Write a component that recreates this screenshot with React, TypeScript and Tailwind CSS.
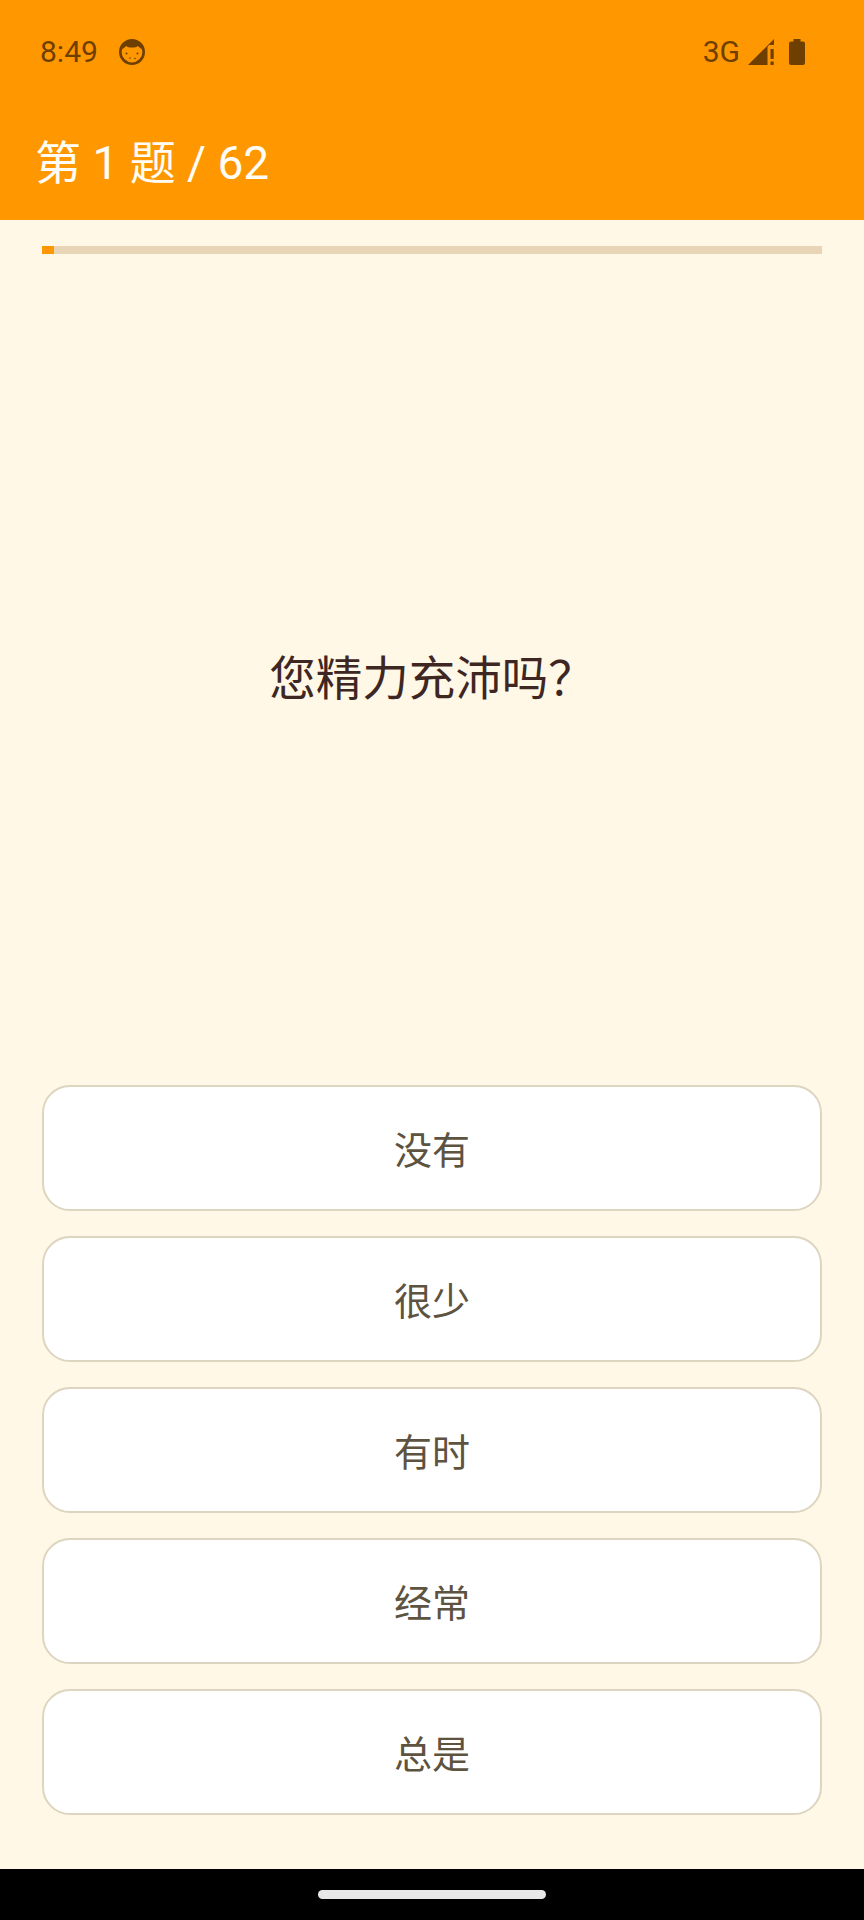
const options = ['没有', '很少', '有时', '经常', '总是'];

const FaceIcon = () => (
  <svg width="28" height="28" viewBox="0 0 28 28" fill="none">
    <circle cx="14" cy="14" r="11.7" stroke="#6e3f00" strokeWidth="2.6" />
    <path d="M4 11c1-5 5-9 10-9s9 4 10 9c-2-.5-3-2-4-3-1.500 1-3 1.500-6 1.500S9.500 9 8 8c-1 1-2 2.500-4 3z" fill="#6e3f00" />
    <circle cx="8.500" cy="15.500" r="1" fill="#6e3f00" />
    <circle cx="19.500" cy="15.500" r="1" fill="#6e3f00" />
    <circle cx="12" cy="20" r="0.800" fill="#6e3f00" />
    <circle cx="17" cy="20.500" r="0.800" fill="#6e3f00" />
  </svg>
);

const SignalIcon = () => (
  <svg width="28" height="28" viewBox="0 0 28 28" fill="#6e3f00">
    <path d="M1 27 L27 1 V7 L22 7 L20.500 9 V27 Z" />
    <rect x="23.500" y="11" width="3.200" height="10" />
    <rect x="23.500" y="23.500" width="3.200" height="3.500" />
  </svg>
);

const BatteryIcon = () => (
  <svg width="18" height="28" viewBox="0 0 18 28" fill="#6e3f00">
    <path d="M5.500 1h7v2.500h2.500a2 2 0 0 1 2 2V25a2 2 0 0 1-2 2H3a2 2 0 0 1-2-2V5.500a2 2 0 0 1 2-2h2.500z" />
  </svg>
);

export default function App() {
  return (
    <div className="flex h-[1920px] w-[864px] flex-col overflow-hidden bg-[#fff8e7] font-['Roboto','Noto_Sans_CJK_SC',sans-serif]">
      {/* Status bar + toolbar */}
      <header className="h-[220px] shrink-0 bg-[#ff9800]">
        <div className="flex h-[103px] items-center justify-between pl-[40px] pr-[58px] text-[#6e3f00]">
          <div className="flex items-center gap-[20px]">
            <span className="text-[30px] leading-none">8:49</span>
            <FaceIcon />
          </div>
          <div className="flex items-center gap-[7px]">
            <span className="text-[30px] leading-none">3G</span>
            <SignalIcon />
            <span className="ml-[6px]"><BatteryIcon /></span>
          </div>
        </div>
        <div className="flex h-[117px] items-center pl-[35px] pt-[3px] text-[46px] leading-[60px] text-[#fffdf5]">第 1 题 / 62</div>
      </header>

      <main className="flex flex-1 flex-col px-[42px]">
        {/* Progress */}
        <div className="mt-[26px] h-[8px] w-full bg-[#e8d5b5]">
          <div className="h-full w-[12px] bg-[#ff9800]" />
        </div>

        {/* Question */}
        <div className="flex flex-1 items-center justify-center pt-[18px]">
          <p className="text-[46.5px] leading-[60px] text-[#3e2723]">您精力充沛吗？</p>
        </div>

        {/* Answers */}
        <div className="flex flex-col gap-[25px] pb-[54px]">
          {options.map((label) => (
            <button
              key={label}
              className="flex h-[126px] w-full items-center justify-center rounded-[28px] border-2 border-[#ddd5bf] bg-white pt-[7px] text-[38px] text-[#5d5340]"
            >
              {label}
            </button>
          ))}
        </div>
      </main>

      {/* Nav bar */}
      <footer className="flex h-[51px] shrink-0 items-center justify-center bg-black">
        <div className="h-[9px] w-[228px] rounded-full bg-[#e8e8e8]" />
      </footer>
    </div>
  );
}
